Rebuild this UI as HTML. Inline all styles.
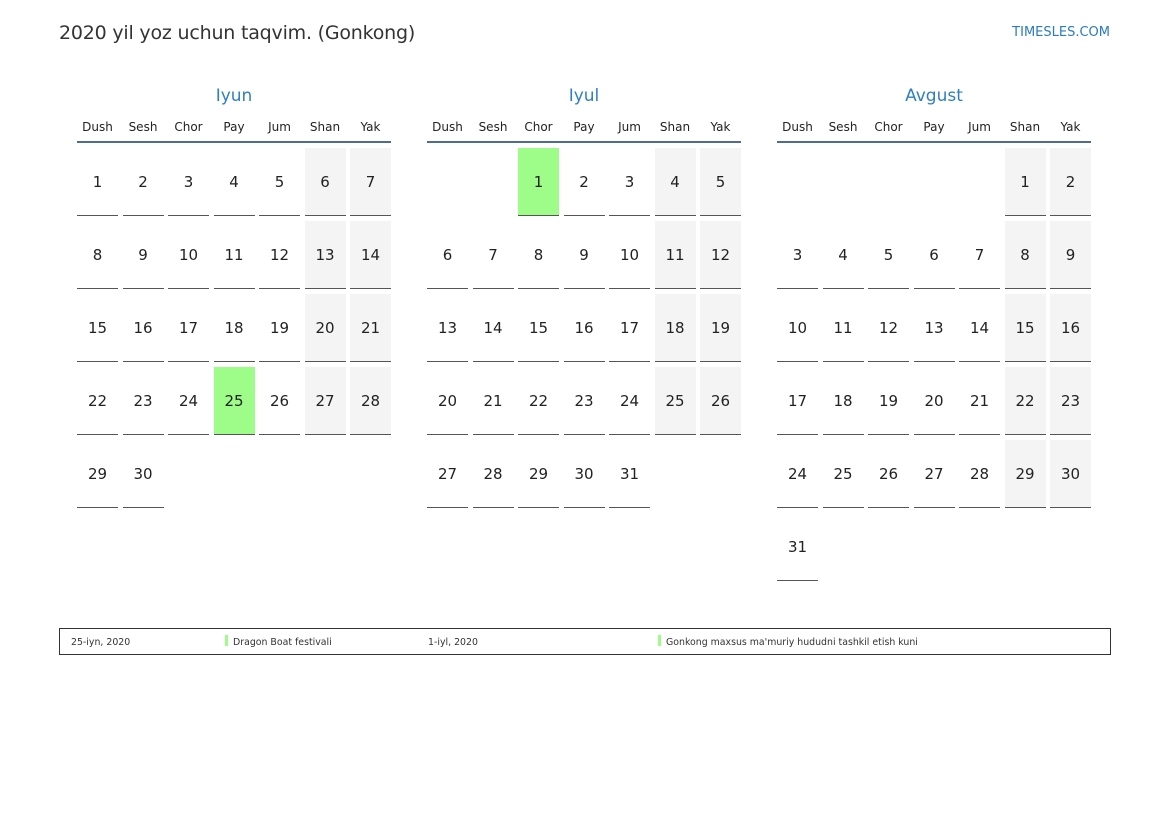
<!DOCTYPE html>
<html><head><meta charset="utf-8"><style>
*{margin:0;padding:0;box-sizing:border-box}
body{width:1169px;height:827px;background:#fff;font-family:"DejaVu Sans","Liberation Sans",sans-serif;position:relative;overflow:hidden;color:#222}
.t{position:absolute;left:59px;top:22px;font-size:19px;letter-spacing:-0.2px;color:#333}
.logo{position:absolute;right:59px;top:25px;font-size:13px;color:#2b7bc0}
.m{position:absolute;top:85px;width:314px}
.mt{text-align:center;font-size:17px;color:#2f7fc1;height:24px;line-height:22px}
.wd{display:grid;grid-template-columns:repeat(7,41px);column-gap:4.5px;font-size:12px;text-align:center;margin-top:11px;height:23px;line-height:14px;border-bottom:2px solid #4d6b94}
.g{display:grid;grid-template-columns:repeat(7,41px);column-gap:4.5px;row-gap:5px;margin-top:5px}
.g div{height:68px;line-height:68px;text-align:center;font-size:15px;border-bottom:1px solid #555}
.g div.w{background:#f4f4f4}
.g div.h{background:#9efc88}
.g div.e{border-bottom:none}
.lg{position:absolute;left:59px;top:628px;width:1052px;height:27px;border:1px solid #333;font-size:9.4px;color:#333}
.lg span{position:absolute;top:8px}
.bar{position:absolute;top:6px;width:3px;height:11px;background:#9efc88}
</style></head><body>
<div class="t">2020 yil yoz uchun taqvim. (Gonkong)</div>
<div class="logo">TIMESLES.COM</div>

<div class="m" style="left:77px">
<div class="mt">Iyun</div>
<div class="wd"><span>Dush</span><span>Sesh</span><span>Chor</span><span>Pay</span><span>Jum</span><span>Shan</span><span>Yak</span></div>
<div class="g">
<div>1</div><div>2</div><div>3</div><div>4</div><div>5</div><div class="w">6</div><div class="w">7</div>
<div>8</div><div>9</div><div>10</div><div>11</div><div>12</div><div class="w">13</div><div class="w">14</div>
<div>15</div><div>16</div><div>17</div><div>18</div><div>19</div><div class="w">20</div><div class="w">21</div>
<div>22</div><div>23</div><div>24</div><div class="h">25</div><div>26</div><div class="w">27</div><div class="w">28</div>
<div>29</div><div>30</div>
</div></div>

<div class="m" style="left:427px">
<div class="mt">Iyul</div>
<div class="wd"><span>Dush</span><span>Sesh</span><span>Chor</span><span>Pay</span><span>Jum</span><span>Shan</span><span>Yak</span></div>
<div class="g">
<div class="e"></div><div class="e"></div><div class="h">1</div><div>2</div><div>3</div><div class="w">4</div><div class="w">5</div>
<div>6</div><div>7</div><div>8</div><div>9</div><div>10</div><div class="w">11</div><div class="w">12</div>
<div>13</div><div>14</div><div>15</div><div>16</div><div>17</div><div class="w">18</div><div class="w">19</div>
<div>20</div><div>21</div><div>22</div><div>23</div><div>24</div><div class="w">25</div><div class="w">26</div>
<div>27</div><div>28</div><div>29</div><div>30</div><div>31</div>
</div></div>

<div class="m" style="left:777px">
<div class="mt">Avgust</div>
<div class="wd"><span>Dush</span><span>Sesh</span><span>Chor</span><span>Pay</span><span>Jum</span><span>Shan</span><span>Yak</span></div>
<div class="g">
<div class="e"></div><div class="e"></div><div class="e"></div><div class="e"></div><div class="e"></div><div class="w">1</div><div class="w">2</div>
<div>3</div><div>4</div><div>5</div><div>6</div><div>7</div><div class="w">8</div><div class="w">9</div>
<div>10</div><div>11</div><div>12</div><div>13</div><div>14</div><div class="w">15</div><div class="w">16</div>
<div>17</div><div>18</div><div>19</div><div>20</div><div>21</div><div class="w">22</div><div class="w">23</div>
<div>24</div><div>25</div><div>26</div><div>27</div><div>28</div><div class="w">29</div><div class="w">30</div>
<div>31</div>
</div></div>

<div class="lg">
<span style="left:11px">25-iyn, 2020</span>
<div class="bar" style="left:165px"></div><span style="left:173px">Dragon Boat festivali</span>
<span style="left:368px">1-iyl, 2020</span>
<div class="bar" style="left:598px"></div><span style="left:606px">Gonkong maxsus ma'muriy hududni tashkil etish kuni</span>
</div>
</body></html>
